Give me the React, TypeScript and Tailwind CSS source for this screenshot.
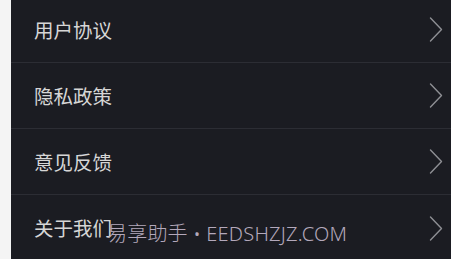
const items = ['用户协议', '隐私政策', '意见反馈', '关于我们']

function Chevron() {
  return (
    <svg width="14" height="25" viewBox="0 0 14 25" fill="none" className="shrink-0">
      <polyline points="1.5,1 12.5,12.5 1.5,24" stroke="#8e8f94" strokeWidth="1.4" strokeLinecap="round" strokeLinejoin="round" />
    </svg>
  )
}

export default function App() {
  return (
    <div className="flex h-[259px] w-[451px] overflow-hidden bg-white">
      <div className="w-[11px] shrink-0 bg-[#f4f4f4]" />
      <div className="relative flex flex-1 flex-col bg-[#1b1c22] [font-family:'Noto_Sans_CJK_SC',sans-serif]">
        <div className="-mt-[3px] flex flex-col">
          {items.map((label, i) => (
            <div
              key={label}
              className={`flex h-[66px] shrink-0 items-center justify-between pl-[23px] pr-[8px] ${
                i < items.length - 1 ? 'border-b border-[#2c2d34]' : ''
              }`}
            >
              <span className="text-[19.5px] leading-none text-[#d6d6d6]">{label}</span>
              <Chevron />
            </div>
          ))}
        </div>
        {/* watermark */}
        <span className="absolute left-[96px] top-[224px] text-[20px] font-light leading-none tracking-[0.2px] text-[#b3a8bb] [font-family:'Noto_Sans','Noto_Sans_CJK_SC',sans-serif]">
          易享助手 • EEDSHZJZ.COM
        </span>
      </div>
    </div>
  )
}
